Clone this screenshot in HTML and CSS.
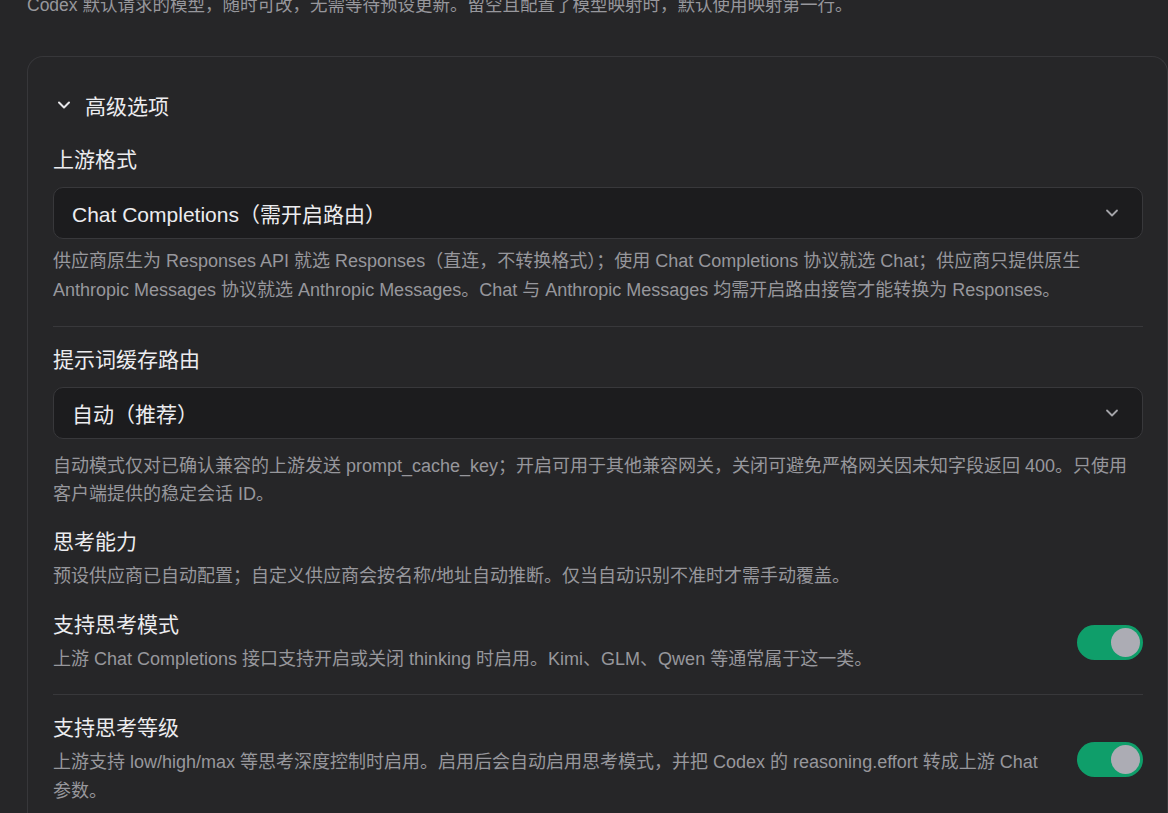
FILE: index.html
```html
<!DOCTYPE html>
<html lang="zh-CN">
<head>
    <meta charset="UTF-8">
    <meta name="viewport" content="width=device-width, initial-scale=1.0">
    <title>供应商设置</title>
    <link rel="stylesheet" href="styles.css">
</head>
<body>
    <div class="page">
        <p class="hint top-hint">Codex 默认请求的模型，随时可改，无需等待预设更新。留空且配置了模型映射时，默认使用映射第一行。</p>

        <div class="card">
            <div class="card-header">
                <svg class="chevron" width="16" height="16" viewBox="0 0 16 16">
                    <path d="M3 5.5 L8 10.5 L13 5.5" fill="none" stroke="#e6e6e9" stroke-width="2" stroke-linecap="round" stroke-linejoin="round"/>
                </svg>
                <span>高级选项</span>
            </div>

            <div class="field">
                <div class="label">上游格式</div>
                <div class="select">
                    <span>Chat Completions（需开启路由）</span>
                    <svg width="16" height="16" viewBox="0 0 16 16">
                        <path d="M3 5.5 L8 10.5 L13 5.5" fill="none" stroke="#a3a3a8" stroke-width="1.8" stroke-linecap="round" stroke-linejoin="round"/>
                    </svg>
                </div>
                <p class="hint">供应商原生为 Responses API 就选 Responses（直连，不转换格式）；使用 Chat Completions 协议就选 Chat；供应商只提供原生 Anthropic Messages 协议就选 Anthropic Messages。Chat 与 Anthropic Messages 均需开启路由接管才能转换为 Responses。</p>
            </div>

            <div class="divider"></div>

            <div class="field">
                <div class="label">提示词缓存路由</div>
                <div class="select">
                    <span>自动（推荐）</span>
                    <svg width="16" height="16" viewBox="0 0 16 16">
                        <path d="M3 5.5 L8 10.5 L13 5.5" fill="none" stroke="#a3a3a8" stroke-width="1.8" stroke-linecap="round" stroke-linejoin="round"/>
                    </svg>
                </div>
                <p class="hint cache-hint">自动模式仅对已确认兼容的上游发送 prompt_cache_key；开启可用于其他兼容网关，关闭可避免严格网关因未知字段返回 400。只使用客户端提供的稳定会话 ID。</p>
            </div>

            <div class="group">
                <div class="label">思考能力</div>
                <p class="hint">预设供应商已自动配置；自定义供应商会按名称/地址自动推断。仅当自动识别不准时才需手动覆盖。</p>
            </div>

            <div class="toggle-row">
                <div class="toggle-text">
                    <div class="label">支持思考模式</div>
                    <p class="hint">上游 Chat Completions 接口支持开启或关闭 thinking 时启用。Kimi、GLM、Qwen 等通常属于这一类。</p>
                </div>
                <div class="switch on"><div class="knob"></div></div>
            </div>

            <div class="divider divider-tight"></div>

            <div class="toggle-row">
                <div class="toggle-text">
                    <div class="label">支持思考等级</div>
                    <p class="hint">上游支持 low/high/max 等思考深度控制时启用。启用后会自动启用思考模式，并把 Codex 的 reasoning.effort 转成上游 Chat 参数。</p>
                </div>
                <div class="switch on"><div class="knob"></div></div>
            </div>
        </div>
    </div>
</body>
</html>
```

FILE: styles.css
```css
html, body {
    margin: 0;
    padding: 0;
}
body {
    background-color: #262628;
    color: #ececef;
    font-family: "Liberation Sans", "Noto Sans CJK SC", sans-serif;
    overflow: hidden;
    height: 813px;
}
.page {
    padding-left: 27px;
    margin-top: -9px;
}
.hint {
    margin: 0;
    font-size: 18px;
    line-height: 29px;
    color: #97979c;
}
.top-hint {
    font-size: 17.5px;
    line-height: 28.5px;
    margin-bottom: 36px;
}
.card {
    width: 1090px;
    border: 1px solid #37373a;
    border-bottom: none;
    border-radius: 16px 16px 0 0;
    padding: 30px 24px 60px 25px;
}
.card-header {
    display: flex;
    align-items: center;
    gap: 13px;
    height: 36px;
    font-size: 21px;
    padding-left: 3px;
    margin-bottom: 23px;
}
.label {
    font-size: 21px;
    line-height: 28px;
    color: #ececef;
}
.field .label {
    margin-bottom: 13px;
}
.select {
    display: flex;
    align-items: center;
    justify-content: space-between;
    height: 50px;
    padding: 0 22px 0 18px;
    background-color: #1c1c1e;
    border: 1px solid #38383b;
    border-radius: 10px;
    font-size: 21px;
    margin-bottom: 8px;
}
.cache-hint {
    margin-top: 13px;
    padding-right: 10px;
    line-height: 28px;
}
.divider {
    height: 1px;
    background-color: #38383b;
    margin: 21px 0 19px;
}
.divider-tight {
    margin: 20px 0 19px;
}
.group {
    margin-top: 20px;
}
.group .hint,
.toggle-text .hint {
    margin-top: 6px;
}
.toggle-row {
    display: flex;
    align-items: center;
    justify-content: space-between;
    gap: 24px;
    margin-top: 20px;
}
.divider + .toggle-row {
    margin-top: 0;
}
.toggle-text {
    flex: 1;
}
.switch {
    flex-shrink: 0;
    width: 66px;
    height: 35px;
    border-radius: 18px;
    background-color: #3a3a3d;
    display: flex;
    align-items: center;
    padding: 0 3px;
    box-sizing: border-box;
}
.switch.on {
    background-color: #0f9e6a;
    justify-content: flex-end;
}
.knob {
    width: 29px;
    height: 29px;
    border-radius: 50%;
    background-color: #acacb4;
}
```
